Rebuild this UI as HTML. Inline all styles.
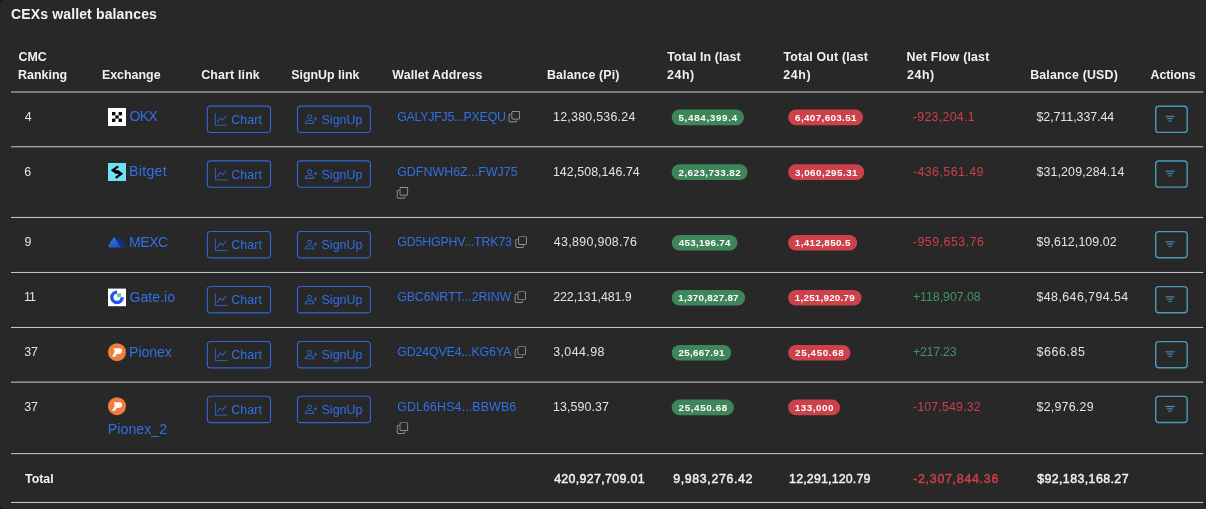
<!DOCTYPE html><html lang="en"><head><meta charset="utf-8"><title>CEXs wallet balances</title><style>

html,body{margin:0;padding:0;background:#282828;}
body{width:1206px;height:509px;overflow:hidden;position:relative;font-family:"Liberation Sans",sans-serif;}
#card{position:absolute;left:0;top:0;width:1206px;height:509px;will-change:transform;}
.corner{position:absolute;width:10px;height:10px;background:#141414;}
.corner i{position:absolute;width:20px;height:20px;border-radius:4px;background:#282828;}
.t{position:absolute;white-space:nowrap;line-height:1;}
.lines{position:absolute;left:0;top:0;width:1206px;height:509px;}

</style></head><body><div id="card">
<div class="corner" style="left:0;top:0;width:4px;height:4px"><i style="left:0;top:0"></i></div>
<div class="corner" style="left:0;bottom:0;width:4px;height:4px"><i style="left:0;bottom:0"></i></div>
<svg class="lines" viewBox="0 0 1206 509"><g id="rules"><rect x="11" y="91.558" width="1192.2" height="0.884" fill="#dee2e6"/><rect x="11" y="146.358" width="1192.2" height="0.884" fill="#dee2e6"/><rect x="11" y="216.958" width="1192.2" height="0.884" fill="#dee2e6"/><rect x="11" y="271.958" width="1192.2" height="0.884" fill="#dee2e6"/><rect x="11" y="326.958" width="1192.2" height="0.884" fill="#dee2e6"/><rect x="11" y="381.658" width="1192.2" height="0.884" fill="#dee2e6"/><rect x="11" y="453.258" width="1192.2" height="0.884" fill="#dee2e6"/><rect x="11" y="501.958" width="1192.2" height="0.884" fill="#dee2e6"/></g><g id="shapes0"><svg x="108.00" y="108.00" width="18" height="18" viewBox="0 0 18 18" overflow="visible"><rect width="18" height="18" fill="#fff"/><rect x="4.05" y="4.05" width="3.3" height="3.3" fill="#000"/><rect x="10.65" y="4.05" width="3.3" height="3.3" fill="#000"/><rect x="7.35" y="7.35" width="3.3" height="3.3" fill="#000"/><rect x="4.05" y="10.65" width="3.3" height="3.3" fill="#000"/><rect x="10.65" y="10.65" width="3.3" height="3.3" fill="#000"/></svg><rect x="207.38" y="106.12" width="63.15" height="26.35" rx="3.2" fill="none" stroke="#2f66d0" stroke-width="1.15"/><svg x="214.90" y="113.00" width="12.40" height="12.40" viewBox="0 0 16 16" fill="#3070e6" overflow="visible"><path fill-rule="evenodd" d="M0 0h1v15h15v1H0zm14.817 3.113a.5.5 0 0 1 .07.704l-4.5 5.5a.5.5 0 0 1-.74.037L7.06 6.767l-3.656 5.027a.5.5 0 0 1-.808-.588l4-5.5a.5.5 0 0 1 .758-.06l2.609 2.61 4.15-5.073a.5.5 0 0 1 .704-.07"/></svg><rect x="297.47" y="106.12" width="72.95" height="26.35" rx="3.2" fill="none" stroke="#2f66d0" stroke-width="1.15"/><svg x="304.90" y="113.00" width="12.40" height="12.40" viewBox="0 0 16 16" fill="#3070e6" overflow="visible"><path d="M6 8a3 3 0 1 0 0-6 3 3 0 0 0 0 6m2-3a2 2 0 1 1-4 0 2 2 0 0 1 4 0m4 8c0 1-1 1-1 1H1s-1 0-1-1 1-4 6-4 6 3 6 4m-1-.004c-.001-.246-.154-.986-.832-1.664C9.516 10.68 8.289 10 6 10s-3.516.68-4.168 1.332c-.678.678-.83 1.418-.832 1.664z"/><path fill-rule="evenodd" d="M13.5 5a.5.5 0 0 1 .5.5V7h1.5a.5.5 0 0 1 0 1H14v1.5a.5.5 0 0 1-1 0V8h-1.5a.5.5 0 0 1 0-1H13V5.5a.5.5 0 0 1 .5-.5"/></svg><svg x="508.70" y="111.00" width="11.30" height="11.30" viewBox="0 0 16 16" fill="#b2b2b2" overflow="visible"><path fill-rule="evenodd" d="M4 2a2 2 0 0 1 2-2h8a2 2 0 0 1 2 2v8a2 2 0 0 1-2 2H6a2 2 0 0 1-2-2zm2-1a1 1 0 0 0-1 1v8a1 1 0 0 0 1 1h8a1 1 0 0 0 1-1V2a1 1 0 0 0-1-1zM2 5a1 1 0 0 0-1 1v8a1 1 0 0 0 1 1h8a1 1 0 0 0 1-1v-1h1v1a2 2 0 0 1-2 2H2a2 2 0 0 1-2-2V6a2 2 0 0 1 2-2h1v1z"/></svg><rect x="671.70" y="109.50" width="72.30" height="15.7" rx="7.85" fill="#3e8659"/><rect x="788.10" y="109.50" width="75.00" height="15.7" rx="7.85" fill="#cd414b"/><rect x="1155.70" y="106.25" width="31.50" height="26.10" rx="3.2" fill="none" stroke="#4a9abb" stroke-width="1.4"/><svg x="1163.80" y="112.90" width="12.40" height="12.40" viewBox="0 0 16 16" fill="#4a9abb" overflow="visible"><path stroke="#4a9abb" stroke-width="0.35" d="M6 10.5a.5.5 0 0 1 .5-.5h3a.5.5 0 0 1 0 1h-3a.5.5 0 0 1-.5-.5m-2-3a.5.5 0 0 1 .5-.5h7a.5.5 0 0 1 0 1h-7a.5.5 0 0 1-.5-.5m-2-3a.5.5 0 0 1 .5-.5h11a.5.5 0 0 1 0 1h-11a.5.5 0 0 1-.5-.5"/></svg></g><g id="shapes1"><svg x="108.00" y="163.00" width="18" height="18" viewBox="0 0 18 18" overflow="visible"><rect width="18" height="18" fill="#6fe0f6"/><path d="M10.2 3.3 L4.7 7.2 L8.9 10.4 M9.1 7.6 L13.3 10.8 L7.7 14.9" fill="none" stroke="#000" stroke-width="2.2" stroke-linejoin="miter"/><path d="M6 7.4 L12 10.6" fill="none" stroke="#000" stroke-width="2.6"/></svg><rect x="207.38" y="160.93" width="63.15" height="26.35" rx="3.2" fill="none" stroke="#2f66d0" stroke-width="1.15"/><svg x="214.90" y="167.80" width="12.40" height="12.40" viewBox="0 0 16 16" fill="#3070e6" overflow="visible"><path fill-rule="evenodd" d="M0 0h1v15h15v1H0zm14.817 3.113a.5.5 0 0 1 .07.704l-4.5 5.5a.5.5 0 0 1-.74.037L7.06 6.767l-3.656 5.027a.5.5 0 0 1-.808-.588l4-5.5a.5.5 0 0 1 .758-.06l2.609 2.61 4.15-5.073a.5.5 0 0 1 .704-.07"/></svg><rect x="297.47" y="160.93" width="72.95" height="26.35" rx="3.2" fill="none" stroke="#2f66d0" stroke-width="1.15"/><svg x="304.90" y="167.80" width="12.40" height="12.40" viewBox="0 0 16 16" fill="#3070e6" overflow="visible"><path d="M6 8a3 3 0 1 0 0-6 3 3 0 0 0 0 6m2-3a2 2 0 1 1-4 0 2 2 0 0 1 4 0m4 8c0 1-1 1-1 1H1s-1 0-1-1 1-4 6-4 6 3 6 4m-1-.004c-.001-.246-.154-.986-.832-1.664C9.516 10.68 8.289 10 6 10s-3.516.68-4.168 1.332c-.678.678-.83 1.418-.832 1.664z"/><path fill-rule="evenodd" d="M13.5 5a.5.5 0 0 1 .5.5V7h1.5a.5.5 0 0 1 0 1H14v1.5a.5.5 0 0 1-1 0V8h-1.5a.5.5 0 0 1 0-1H13V5.5a.5.5 0 0 1 .5-.5"/></svg><svg x="396.80" y="187.10" width="11.30" height="11.30" viewBox="0 0 16 16" fill="#b2b2b2" overflow="visible"><path fill-rule="evenodd" d="M4 2a2 2 0 0 1 2-2h8a2 2 0 0 1 2 2v8a2 2 0 0 1-2 2H6a2 2 0 0 1-2-2zm2-1a1 1 0 0 0-1 1v8a1 1 0 0 0 1 1h8a1 1 0 0 0 1-1V2a1 1 0 0 0-1-1zM2 5a1 1 0 0 0-1 1v8a1 1 0 0 0 1 1h8a1 1 0 0 0 1-1v-1h1v1a2 2 0 0 1-2 2H2a2 2 0 0 1-2-2V6a2 2 0 0 1 2-2h1v1z"/></svg><rect x="671.70" y="164.30" width="75.90" height="15.7" rx="7.85" fill="#3e8659"/><rect x="788.10" y="164.30" width="76.10" height="15.7" rx="7.85" fill="#cd414b"/><rect x="1155.70" y="161.05" width="31.50" height="26.10" rx="3.2" fill="none" stroke="#4a9abb" stroke-width="1.4"/><svg x="1163.80" y="167.70" width="12.40" height="12.40" viewBox="0 0 16 16" fill="#4a9abb" overflow="visible"><path stroke="#4a9abb" stroke-width="0.35" d="M6 10.5a.5.5 0 0 1 .5-.5h3a.5.5 0 0 1 0 1h-3a.5.5 0 0 1-.5-.5m-2-3a.5.5 0 0 1 .5-.5h7a.5.5 0 0 1 0 1h-7a.5.5 0 0 1-.5-.5m-2-3a.5.5 0 0 1 .5-.5h11a.5.5 0 0 1 0 1h-11a.5.5 0 0 1-.5-.5"/></svg></g><g id="shapes2"><svg x="108.00" y="233.60" width="18" height="18" viewBox="0 0 18 18" overflow="visible"><defs><linearGradient id="mx233" x1="0" y1="0" x2="1" y2="1"><stop offset="0" stop-color="#3374ea"/><stop offset="1" stop-color="#1d4fb4"/></linearGradient></defs><path d="M10.6 4.4 Q11.7 2.9 12.8 4.4 L17.3 11.9 Q18 13.6 16.3 13.9 L8.5 13.9 Z" fill="#12317f"/><path d="M5 4.5 Q6.1 2.9 7.2 4.5 L12.9 13.9 L1.6 13.9 Q-0.2 13.6 0.6 11.9 Z" fill="url(#mx233)"/></svg><rect x="207.38" y="231.53" width="63.15" height="26.35" rx="3.2" fill="none" stroke="#2f66d0" stroke-width="1.15"/><svg x="214.90" y="238.40" width="12.40" height="12.40" viewBox="0 0 16 16" fill="#3070e6" overflow="visible"><path fill-rule="evenodd" d="M0 0h1v15h15v1H0zm14.817 3.113a.5.5 0 0 1 .07.704l-4.5 5.5a.5.5 0 0 1-.74.037L7.06 6.767l-3.656 5.027a.5.5 0 0 1-.808-.588l4-5.5a.5.5 0 0 1 .758-.06l2.609 2.61 4.15-5.073a.5.5 0 0 1 .704-.07"/></svg><rect x="297.47" y="231.53" width="72.95" height="26.35" rx="3.2" fill="none" stroke="#2f66d0" stroke-width="1.15"/><svg x="304.90" y="238.40" width="12.40" height="12.40" viewBox="0 0 16 16" fill="#3070e6" overflow="visible"><path d="M6 8a3 3 0 1 0 0-6 3 3 0 0 0 0 6m2-3a2 2 0 1 1-4 0 2 2 0 0 1 4 0m4 8c0 1-1 1-1 1H1s-1 0-1-1 1-4 6-4 6 3 6 4m-1-.004c-.001-.246-.154-.986-.832-1.664C9.516 10.68 8.289 10 6 10s-3.516.68-4.168 1.332c-.678.678-.83 1.418-.832 1.664z"/><path fill-rule="evenodd" d="M13.5 5a.5.5 0 0 1 .5.5V7h1.5a.5.5 0 0 1 0 1H14v1.5a.5.5 0 0 1-1 0V8h-1.5a.5.5 0 0 1 0-1H13V5.5a.5.5 0 0 1 .5-.5"/></svg><svg x="515.40" y="236.40" width="11.30" height="11.30" viewBox="0 0 16 16" fill="#b2b2b2" overflow="visible"><path fill-rule="evenodd" d="M4 2a2 2 0 0 1 2-2h8a2 2 0 0 1 2 2v8a2 2 0 0 1-2 2H6a2 2 0 0 1-2-2zm2-1a1 1 0 0 0-1 1v8a1 1 0 0 0 1 1h8a1 1 0 0 0 1-1V2a1 1 0 0 0-1-1zM2 5a1 1 0 0 0-1 1v8a1 1 0 0 0 1 1h8a1 1 0 0 0 1-1v-1h1v1a2 2 0 0 1-2 2H2a2 2 0 0 1-2-2V6a2 2 0 0 1 2-2h1v1z"/></svg><rect x="671.70" y="234.90" width="65.80" height="15.7" rx="7.85" fill="#3e8659"/><rect x="788.10" y="234.90" width="69.10" height="15.7" rx="7.85" fill="#cd414b"/><rect x="1155.70" y="231.65" width="31.50" height="26.10" rx="3.2" fill="none" stroke="#4a9abb" stroke-width="1.4"/><svg x="1163.80" y="238.30" width="12.40" height="12.40" viewBox="0 0 16 16" fill="#4a9abb" overflow="visible"><path stroke="#4a9abb" stroke-width="0.35" d="M6 10.5a.5.5 0 0 1 .5-.5h3a.5.5 0 0 1 0 1h-3a.5.5 0 0 1-.5-.5m-2-3a.5.5 0 0 1 .5-.5h7a.5.5 0 0 1 0 1h-7a.5.5 0 0 1-.5-.5m-2-3a.5.5 0 0 1 .5-.5h11a.5.5 0 0 1 0 1h-11a.5.5 0 0 1-.5-.5"/></svg></g><g id="shapes3"><svg x="108.00" y="288.60" width="18" height="18" viewBox="0 0 18 18" overflow="visible"><rect y="0" width="18" height="17.6" fill="#fff"/><path d="M9 3.55 A5.2 5.2 0 1 0 14.2 8.75" fill="none" stroke="#2354e6" stroke-width="3.4"/><rect x="9" y="4.8" width="4.1" height="3.8" fill="#4bd79a"/></svg><rect x="207.38" y="286.52" width="63.15" height="26.35" rx="3.2" fill="none" stroke="#2f66d0" stroke-width="1.15"/><svg x="214.90" y="293.40" width="12.40" height="12.40" viewBox="0 0 16 16" fill="#3070e6" overflow="visible"><path fill-rule="evenodd" d="M0 0h1v15h15v1H0zm14.817 3.113a.5.5 0 0 1 .07.704l-4.5 5.5a.5.5 0 0 1-.74.037L7.06 6.767l-3.656 5.027a.5.5 0 0 1-.808-.588l4-5.5a.5.5 0 0 1 .758-.06l2.609 2.61 4.15-5.073a.5.5 0 0 1 .704-.07"/></svg><rect x="297.47" y="286.52" width="72.95" height="26.35" rx="3.2" fill="none" stroke="#2f66d0" stroke-width="1.15"/><svg x="304.90" y="293.40" width="12.40" height="12.40" viewBox="0 0 16 16" fill="#3070e6" overflow="visible"><path d="M6 8a3 3 0 1 0 0-6 3 3 0 0 0 0 6m2-3a2 2 0 1 1-4 0 2 2 0 0 1 4 0m4 8c0 1-1 1-1 1H1s-1 0-1-1 1-4 6-4 6 3 6 4m-1-.004c-.001-.246-.154-.986-.832-1.664C9.516 10.68 8.289 10 6 10s-3.516.68-4.168 1.332c-.678.678-.83 1.418-.832 1.664z"/><path fill-rule="evenodd" d="M13.5 5a.5.5 0 0 1 .5.5V7h1.5a.5.5 0 0 1 0 1H14v1.5a.5.5 0 0 1-1 0V8h-1.5a.5.5 0 0 1 0-1H13V5.5a.5.5 0 0 1 .5-.5"/></svg><svg x="514.70" y="291.40" width="11.30" height="11.30" viewBox="0 0 16 16" fill="#b2b2b2" overflow="visible"><path fill-rule="evenodd" d="M4 2a2 2 0 0 1 2-2h8a2 2 0 0 1 2 2v8a2 2 0 0 1-2 2H6a2 2 0 0 1-2-2zm2-1a1 1 0 0 0-1 1v8a1 1 0 0 0 1 1h8a1 1 0 0 0 1-1V2a1 1 0 0 0-1-1zM2 5a1 1 0 0 0-1 1v8a1 1 0 0 0 1 1h8a1 1 0 0 0 1-1v-1h1v1a2 2 0 0 1-2 2H2a2 2 0 0 1-2-2V6a2 2 0 0 1 2-2h1v1z"/></svg><rect x="671.70" y="289.90" width="73.50" height="15.7" rx="7.85" fill="#3e8659"/><rect x="788.10" y="289.90" width="73.40" height="15.7" rx="7.85" fill="#cd414b"/><rect x="1155.70" y="286.65" width="31.50" height="26.10" rx="3.2" fill="none" stroke="#4a9abb" stroke-width="1.4"/><svg x="1163.80" y="293.30" width="12.40" height="12.40" viewBox="0 0 16 16" fill="#4a9abb" overflow="visible"><path stroke="#4a9abb" stroke-width="0.35" d="M6 10.5a.5.5 0 0 1 .5-.5h3a.5.5 0 0 1 0 1h-3a.5.5 0 0 1-.5-.5m-2-3a.5.5 0 0 1 .5-.5h7a.5.5 0 0 1 0 1h-7a.5.5 0 0 1-.5-.5m-2-3a.5.5 0 0 1 .5-.5h11a.5.5 0 0 1 0 1h-11a.5.5 0 0 1-.5-.5"/></svg></g><g id="shapes4"><svg x="108.00" y="343.20" width="18" height="18" viewBox="0 0 18 18" overflow="visible"><circle cx="9" cy="9" r="9" fill="#f07d3b"/><path d="M5.6 5 L11.6 5 Q14.3 5.2 14.1 7.8 Q13.9 10.4 11.9 10.7 L8.8 10.9 L7.1 13.6 L4.1 13.6 L6.8 8.5 Z" fill="#fff" opacity="0.95"/></svg><rect x="207.38" y="341.52" width="63.15" height="26.35" rx="3.2" fill="none" stroke="#2f66d0" stroke-width="1.15"/><svg x="214.90" y="348.40" width="12.40" height="12.40" viewBox="0 0 16 16" fill="#3070e6" overflow="visible"><path fill-rule="evenodd" d="M0 0h1v15h15v1H0zm14.817 3.113a.5.5 0 0 1 .07.704l-4.5 5.5a.5.5 0 0 1-.74.037L7.06 6.767l-3.656 5.027a.5.5 0 0 1-.808-.588l4-5.5a.5.5 0 0 1 .758-.06l2.609 2.61 4.15-5.073a.5.5 0 0 1 .704-.07"/></svg><rect x="297.47" y="341.52" width="72.95" height="26.35" rx="3.2" fill="none" stroke="#2f66d0" stroke-width="1.15"/><svg x="304.90" y="348.40" width="12.40" height="12.40" viewBox="0 0 16 16" fill="#3070e6" overflow="visible"><path d="M6 8a3 3 0 1 0 0-6 3 3 0 0 0 0 6m2-3a2 2 0 1 1-4 0 2 2 0 0 1 4 0m4 8c0 1-1 1-1 1H1s-1 0-1-1 1-4 6-4 6 3 6 4m-1-.004c-.001-.246-.154-.986-.832-1.664C9.516 10.68 8.289 10 6 10s-3.516.68-4.168 1.332c-.678.678-.83 1.418-.832 1.664z"/><path fill-rule="evenodd" d="M13.5 5a.5.5 0 0 1 .5.5V7h1.5a.5.5 0 0 1 0 1H14v1.5a.5.5 0 0 1-1 0V8h-1.5a.5.5 0 0 1 0-1H13V5.5a.5.5 0 0 1 .5-.5"/></svg><svg x="514.70" y="346.40" width="11.30" height="11.30" viewBox="0 0 16 16" fill="#b2b2b2" overflow="visible"><path fill-rule="evenodd" d="M4 2a2 2 0 0 1 2-2h8a2 2 0 0 1 2 2v8a2 2 0 0 1-2 2H6a2 2 0 0 1-2-2zm2-1a1 1 0 0 0-1 1v8a1 1 0 0 0 1 1h8a1 1 0 0 0 1-1V2a1 1 0 0 0-1-1zM2 5a1 1 0 0 0-1 1v8a1 1 0 0 0 1 1h8a1 1 0 0 0 1-1v-1h1v1a2 2 0 0 1-2 2H2a2 2 0 0 1-2-2V6a2 2 0 0 1 2-2h1v1z"/></svg><rect x="671.70" y="344.90" width="59.50" height="15.7" rx="7.85" fill="#3e8659"/><rect x="788.10" y="344.90" width="62.40" height="15.7" rx="7.85" fill="#cd414b"/><rect x="1155.70" y="341.65" width="31.50" height="26.10" rx="3.2" fill="none" stroke="#4a9abb" stroke-width="1.4"/><svg x="1163.80" y="348.30" width="12.40" height="12.40" viewBox="0 0 16 16" fill="#4a9abb" overflow="visible"><path stroke="#4a9abb" stroke-width="0.35" d="M6 10.5a.5.5 0 0 1 .5-.5h3a.5.5 0 0 1 0 1h-3a.5.5 0 0 1-.5-.5m-2-3a.5.5 0 0 1 .5-.5h7a.5.5 0 0 1 0 1h-7a.5.5 0 0 1-.5-.5m-2-3a.5.5 0 0 1 .5-.5h11a.5.5 0 0 1 0 1h-11a.5.5 0 0 1-.5-.5"/></svg></g><g id="shapes5"><svg x="108.00" y="397.15" width="18" height="18" viewBox="0 0 18 18" overflow="visible"><circle cx="9" cy="9" r="9" fill="#f07d3b"/><path d="M5.6 5 L11.6 5 Q14.3 5.2 14.1 7.8 Q13.9 10.4 11.9 10.7 L8.8 10.9 L7.1 13.6 L4.1 13.6 L6.8 8.5 Z" fill="#fff" opacity="0.95"/></svg><rect x="207.38" y="396.23" width="63.15" height="26.35" rx="3.2" fill="none" stroke="#2f66d0" stroke-width="1.15"/><svg x="214.90" y="403.10" width="12.40" height="12.40" viewBox="0 0 16 16" fill="#3070e6" overflow="visible"><path fill-rule="evenodd" d="M0 0h1v15h15v1H0zm14.817 3.113a.5.5 0 0 1 .07.704l-4.5 5.5a.5.5 0 0 1-.74.037L7.06 6.767l-3.656 5.027a.5.5 0 0 1-.808-.588l4-5.5a.5.5 0 0 1 .758-.06l2.609 2.61 4.15-5.073a.5.5 0 0 1 .704-.07"/></svg><rect x="297.47" y="396.23" width="72.95" height="26.35" rx="3.2" fill="none" stroke="#2f66d0" stroke-width="1.15"/><svg x="304.90" y="403.10" width="12.40" height="12.40" viewBox="0 0 16 16" fill="#3070e6" overflow="visible"><path d="M6 8a3 3 0 1 0 0-6 3 3 0 0 0 0 6m2-3a2 2 0 1 1-4 0 2 2 0 0 1 4 0m4 8c0 1-1 1-1 1H1s-1 0-1-1 1-4 6-4 6 3 6 4m-1-.004c-.001-.246-.154-.986-.832-1.664C9.516 10.68 8.289 10 6 10s-3.516.68-4.168 1.332c-.678.678-.83 1.418-.832 1.664z"/><path fill-rule="evenodd" d="M13.5 5a.5.5 0 0 1 .5.5V7h1.5a.5.5 0 0 1 0 1H14v1.5a.5.5 0 0 1-1 0V8h-1.5a.5.5 0 0 1 0-1H13V5.5a.5.5 0 0 1 .5-.5"/></svg><svg x="396.80" y="422.40" width="11.30" height="11.30" viewBox="0 0 16 16" fill="#b2b2b2" overflow="visible"><path fill-rule="evenodd" d="M4 2a2 2 0 0 1 2-2h8a2 2 0 0 1 2 2v8a2 2 0 0 1-2 2H6a2 2 0 0 1-2-2zm2-1a1 1 0 0 0-1 1v8a1 1 0 0 0 1 1h8a1 1 0 0 0 1-1V2a1 1 0 0 0-1-1zM2 5a1 1 0 0 0-1 1v8a1 1 0 0 0 1 1h8a1 1 0 0 0 1-1v-1h1v1a2 2 0 0 1-2 2H2a2 2 0 0 1-2-2V6a2 2 0 0 1 2-2h1v1z"/></svg><rect x="671.70" y="399.60" width="62.20" height="15.7" rx="7.85" fill="#3e8659"/><rect x="788.10" y="399.60" width="51.90" height="15.7" rx="7.85" fill="#cd414b"/><rect x="1155.70" y="396.35" width="31.50" height="26.10" rx="3.2" fill="none" stroke="#4a9abb" stroke-width="1.4"/><svg x="1163.80" y="403.00" width="12.40" height="12.40" viewBox="0 0 16 16" fill="#4a9abb" overflow="visible"><path stroke="#4a9abb" stroke-width="0.35" d="M6 10.5a.5.5 0 0 1 .5-.5h3a.5.5 0 0 1 0 1h-3a.5.5 0 0 1-.5-.5m-2-3a.5.5 0 0 1 .5-.5h7a.5.5 0 0 1 0 1h-7a.5.5 0 0 1-.5-.5m-2-3a.5.5 0 0 1 .5-.5h11a.5.5 0 0 1 0 1h-11a.5.5 0 0 1-.5-.5"/></svg></g></svg>
<div class="head"><span class="t" id="title" style="left:11.00px;top:7.00px;font-size:14.0px;color:#f3f3f3;letter-spacing:0.142px;font-weight:700">CEXs wallet balances</span><span class="t" id="h_cmc" style="left:18.46px;top:51.00px;font-size:12.4px;color:#f1f1f1;letter-spacing:-0.000px;font-weight:700">CMC</span><span class="t" id="h_rank" style="left:18.06px;top:69.00px;font-size:12.4px;color:#f1f1f1;letter-spacing:0.036px;font-weight:700">Ranking</span><span class="t" id="h_ex" style="left:101.93px;top:69.00px;font-size:12.4px;color:#f1f1f1;letter-spacing:0.013px;font-weight:700">Exchange</span><span class="t" id="h_cl" style="left:201.20px;top:69.00px;font-size:12.4px;color:#f1f1f1;letter-spacing:0.158px;font-weight:700">Chart link</span><span class="t" id="h_sl" style="left:291.24px;top:69.00px;font-size:12.4px;color:#f1f1f1;letter-spacing:0.011px;font-weight:700">SignUp link</span><span class="t" id="h_wa" style="left:392.33px;top:69.00px;font-size:12.4px;color:#f1f1f1;letter-spacing:0.104px;font-weight:700">Wallet Address</span><span class="t" id="h_bp" style="left:547.01px;top:69.00px;font-size:12.4px;color:#f1f1f1;letter-spacing:0.129px;font-weight:700">Balance (Pi)</span><span class="t" id="h_ti1" style="left:667.35px;top:51.00px;font-size:12.4px;color:#f1f1f1;letter-spacing:0.088px;font-weight:700">Total In (last</span><span class="t" id="h_ti2" style="left:666.96px;top:69.00px;font-size:12.4px;color:#f1f1f1;letter-spacing:0.575px;font-weight:700">24h)</span><span class="t" id="h_to1" style="left:783.55px;top:51.00px;font-size:12.4px;color:#f1f1f1;letter-spacing:0.146px;font-weight:700">Total Out (last</span><span class="t" id="h_to2" style="left:783.37px;top:69.00px;font-size:12.4px;color:#f1f1f1;letter-spacing:0.593px;font-weight:700">24h)</span><span class="t" id="h_nf1" style="left:906.59px;top:51.00px;font-size:12.4px;color:#f1f1f1;letter-spacing:0.168px;font-weight:700">Net Flow (last</span><span class="t" id="h_nf2" style="left:906.96px;top:69.00px;font-size:12.4px;color:#f1f1f1;letter-spacing:0.575px;font-weight:700">24h)</span><span class="t" id="h_bu" style="left:1030.16px;top:69.00px;font-size:12.4px;color:#f1f1f1;letter-spacing:0.189px;font-weight:700">Balance (USD)</span><span class="t" id="h_ac" style="left:1150.61px;top:69.00px;font-size:12.4px;color:#f1f1f1;letter-spacing:-0.068px;font-weight:700">Actions</span></div>
<div class="row" id="row0"><span class="t" id="r0_rank" style="left:24.64px;top:111.00px;font-size:12.4px;color:#e4e4e4;letter-spacing:-1.000px">4</span><span class="t" id="r0_name" style="left:129.61px;top:109.00px;font-size:14.1px;color:#3070e6;letter-spacing:-0.878px">OKX</span><span class="t" id="r0_chart" style="left:231.14px;top:114.00px;font-size:12.4px;color:#3070e6;letter-spacing:0.119px">Chart</span><span class="t" id="r0_signup" style="left:321.59px;top:114.00px;font-size:12.4px;color:#3070e6;letter-spacing:0.023px">SignUp</span><span class="t" id="r0_addr" style="left:397.16px;top:111.00px;font-size:12.4px;color:#3070e6;letter-spacing:-0.260px">GALYJFJ5...PXEQU</span><span class="t" id="r0_bal" style="left:553.01px;top:111.00px;font-size:12.4px;color:#e4e4e4;letter-spacing:0.258px">12,380,536.24</span><span class="t" id="r0_tin" style="left:678.45px;top:113.00px;font-size:9.8px;color:#fff;letter-spacing:0.690px;font-weight:700">5,484,399.4</span><span class="t" id="r0_tout" style="left:795.12px;top:113.00px;font-size:9.8px;color:#fff;letter-spacing:0.380px;font-weight:700">6,407,603.51</span><span class="t" id="r0_net" style="left:912.89px;top:111.00px;font-size:12.4px;color:#cf3e4a;letter-spacing:0.275px">-923,204.1</span><span class="t" id="r0_usd" style="left:1036.44px;top:111.00px;font-size:12.4px;color:#e4e4e4;letter-spacing:-0.045px">$2,711,337.44</span></div>
<div class="row" id="row1"><span class="t" id="r1_rank" style="left:24.32px;top:166.00px;font-size:12.4px;color:#e4e4e4;letter-spacing:9.230px">6</span><span class="t" id="r1_name" style="left:129.05px;top:164.00px;font-size:14.1px;color:#3070e6;letter-spacing:0.302px">Bitget</span><span class="t" id="r1_chart" style="left:231.14px;top:169.00px;font-size:12.4px;color:#3070e6;letter-spacing:0.119px">Chart</span><span class="t" id="r1_signup" style="left:321.59px;top:169.00px;font-size:12.4px;color:#3070e6;letter-spacing:0.023px">SignUp</span><span class="t" id="r1_addr" style="left:397.16px;top:166.00px;font-size:12.4px;color:#3070e6;letter-spacing:0.041px">GDFNWH6Z...FWJ75</span><span class="t" id="r1_bal" style="left:552.93px;top:166.00px;font-size:12.4px;color:#e4e4e4;letter-spacing:0.051px">142,508,146.74</span><span class="t" id="r1_tin" style="left:678.57px;top:168.00px;font-size:9.8px;color:#fff;letter-spacing:0.445px;font-weight:700">2,623,733.82</span><span class="t" id="r1_tout" style="left:795.06px;top:168.00px;font-size:9.8px;color:#fff;letter-spacing:0.484px;font-weight:700">3,060,295.31</span><span class="t" id="r1_net" style="left:912.89px;top:166.00px;font-size:12.4px;color:#cf3e4a;letter-spacing:0.437px">-436,561.49</span><span class="t" id="r1_usd" style="left:1036.44px;top:166.00px;font-size:12.4px;color:#e4e4e4;letter-spacing:0.132px">$31,209,284.14</span></div>
<div class="row" id="row2"><span class="t" id="r2_rank" style="left:24.39px;top:236.00px;font-size:12.4px;color:#e4e4e4;letter-spacing:8.616px">9</span><span class="t" id="r2_name" style="left:129.09px;top:235.00px;font-size:14.1px;color:#3070e6;letter-spacing:-0.500px">MEXC</span><span class="t" id="r2_chart" style="left:231.14px;top:239.00px;font-size:12.4px;color:#3070e6;letter-spacing:0.119px">Chart</span><span class="t" id="r2_signup" style="left:321.59px;top:239.00px;font-size:12.4px;color:#3070e6;letter-spacing:0.023px">SignUp</span><span class="t" id="r2_addr" style="left:397.22px;top:236.00px;font-size:12.4px;color:#3070e6;letter-spacing:-0.168px">GD5HGPHV...TRK73</span><span class="t" id="r2_bal" style="left:553.78px;top:236.00px;font-size:12.4px;color:#e4e4e4;letter-spacing:0.331px">43,890,908.76</span><span class="t" id="r2_tin" style="left:678.71px;top:238.00px;font-size:9.8px;color:#fff;letter-spacing:0.302px;font-weight:700">453,196.74</span><span class="t" id="r2_tout" style="left:794.87px;top:238.00px;font-size:9.8px;color:#fff;letter-spacing:0.372px;font-weight:700">1,412,850.5</span><span class="t" id="r2_net" style="left:912.89px;top:236.00px;font-size:12.4px;color:#cf3e4a;letter-spacing:0.480px">-959,653.76</span><span class="t" id="r2_usd" style="left:1036.45px;top:236.00px;font-size:12.4px;color:#e4e4e4;letter-spacing:0.086px">$9,612,109.02</span></div>
<div class="row" id="row3"><span class="t" id="r3_rank" style="left:23.96px;top:291.00px;font-size:12.4px;color:#e4e4e4;letter-spacing:-1.000px">11</span><span class="t" id="r3_name" style="left:129.47px;top:290.00px;font-size:14.1px;color:#3070e6;letter-spacing:0.027px">Gate.io</span><span class="t" id="r3_chart" style="left:231.14px;top:294.00px;font-size:12.4px;color:#3070e6;letter-spacing:0.119px">Chart</span><span class="t" id="r3_signup" style="left:321.59px;top:294.00px;font-size:12.4px;color:#3070e6;letter-spacing:0.023px">SignUp</span><span class="t" id="r3_addr" style="left:397.14px;top:291.00px;font-size:12.4px;color:#3070e6;letter-spacing:-0.089px">GBC6NRTT...2RINW</span><span class="t" id="r3_bal" style="left:553.20px;top:291.00px;font-size:12.4px;color:#e4e4e4;letter-spacing:-0.067px">222,131,481.9</span><span class="t" id="r3_tin" style="left:678.35px;top:293.00px;font-size:9.8px;color:#fff;letter-spacing:0.273px;font-weight:700">1,370,827.87</span><span class="t" id="r3_tout" style="left:794.87px;top:293.00px;font-size:9.8px;color:#fff;letter-spacing:0.231px;font-weight:700">1,251,920.79</span><span class="t" id="r3_net" style="left:912.92px;top:291.00px;font-size:12.4px;color:#3f9560;letter-spacing:-0.052px">+118,907.08</span><span class="t" id="r3_usd" style="left:1036.44px;top:291.00px;font-size:12.4px;color:#e4e4e4;letter-spacing:0.427px">$48,646,794.54</span></div>
<div class="row" id="row4"><span class="t" id="r4_rank" style="left:24.16px;top:346.00px;font-size:12.4px;color:#e4e4e4;letter-spacing:-0.083px">37</span><span class="t" id="r4_name" style="left:129.11px;top:345.00px;font-size:14.1px;color:#3070e6;letter-spacing:-0.098px">Pionex</span><span class="t" id="r4_chart" style="left:231.14px;top:349.00px;font-size:12.4px;color:#3070e6;letter-spacing:0.119px">Chart</span><span class="t" id="r4_signup" style="left:321.59px;top:349.00px;font-size:12.4px;color:#3070e6;letter-spacing:0.023px">SignUp</span><span class="t" id="r4_addr" style="left:397.14px;top:346.00px;font-size:12.4px;color:#3070e6;letter-spacing:-0.129px">GD24QVE4...KG6YA</span><span class="t" id="r4_bal" style="left:553.19px;top:346.00px;font-size:12.4px;color:#e4e4e4;letter-spacing:0.416px">3,044.98</span><span class="t" id="r4_tin" style="left:678.49px;top:348.00px;font-size:9.8px;color:#fff;letter-spacing:0.293px;font-weight:700">25,667.91</span><span class="t" id="r4_tout" style="left:795.10px;top:348.00px;font-size:9.8px;color:#fff;letter-spacing:0.634px;font-weight:700">25,450.68</span><span class="t" id="r4_net" style="left:912.92px;top:346.00px;font-size:12.4px;color:#3f9560;letter-spacing:-0.227px">+217.23</span><span class="t" id="r4_usd" style="left:1036.44px;top:346.00px;font-size:12.4px;color:#e4e4e4;letter-spacing:0.609px">$666.85</span></div>
<div class="row" id="row5"><span class="t" id="r5_rank" style="left:24.16px;top:401.00px;font-size:12.4px;color:#e4e4e4;letter-spacing:-0.083px">37</span><span class="t" id="r5_name" style="left:107.87px;top:422.00px;font-size:14.1px;color:#3070e6;letter-spacing:0.049px">Pionex_2</span><span class="t" id="r5_chart" style="left:231.14px;top:404.00px;font-size:12.4px;color:#3070e6;letter-spacing:0.119px">Chart</span><span class="t" id="r5_signup" style="left:321.59px;top:404.00px;font-size:12.4px;color:#3070e6;letter-spacing:0.023px">SignUp</span><span class="t" id="r5_addr" style="left:397.16px;top:401.00px;font-size:12.4px;color:#3070e6;letter-spacing:0.133px">GDL66HS4...BBWB6</span><span class="t" id="r5_bal" style="left:553.01px;top:401.00px;font-size:12.4px;color:#e4e4e4;letter-spacing:0.084px">13,590.37</span><span class="t" id="r5_tin" style="left:678.57px;top:403.00px;font-size:9.8px;color:#fff;letter-spacing:0.630px;font-weight:700">25,450.68</span><span class="t" id="r5_tout" style="left:794.87px;top:403.00px;font-size:9.8px;color:#fff;letter-spacing:0.521px;font-weight:700">133,000</span><span class="t" id="r5_net" style="left:912.89px;top:401.00px;font-size:12.4px;color:#cf3e4a;letter-spacing:0.175px">-107,549.32</span><span class="t" id="r5_usd" style="left:1036.58px;top:401.00px;font-size:12.4px;color:#e4e4e4;letter-spacing:0.232px">$2,976.29</span></div>
<div class="row total"><span class="t" id="t_label" style="left:25.12px;top:473.00px;font-size:12.4px;color:#f1f1f1;letter-spacing:-0.052px;font-weight:700">Total</span><span class="t" id="t_bal" style="left:554.13px;top:473.00px;font-size:12.4px;color:#f1f1f1;letter-spacing:0.329px;-webkit-text-stroke:0.45px #f1f1f1">420,927,709.01</span><span class="t" id="t_in" style="left:673.26px;top:473.00px;font-size:12.4px;color:#f1f1f1;letter-spacing:0.618px;-webkit-text-stroke:0.45px #f1f1f1">9,983,276.42</span><span class="t" id="t_out" style="left:789.07px;top:473.00px;font-size:12.4px;color:#f1f1f1;letter-spacing:0.178px;-webkit-text-stroke:0.45px #f1f1f1">12,291,120.79</span><span class="t" id="t_net" style="left:913.16px;top:473.00px;font-size:12.4px;color:#cf3e4a;letter-spacing:0.721px;-webkit-text-stroke:0.45px #cf3e4a">-2,307,844.36</span><span class="t" id="t_usd" style="left:1037.15px;top:473.00px;font-size:12.4px;color:#f1f1f1;letter-spacing:0.404px;-webkit-text-stroke:0.45px #f1f1f1">$92,183,168.27</span></div>
</div></body></html>
